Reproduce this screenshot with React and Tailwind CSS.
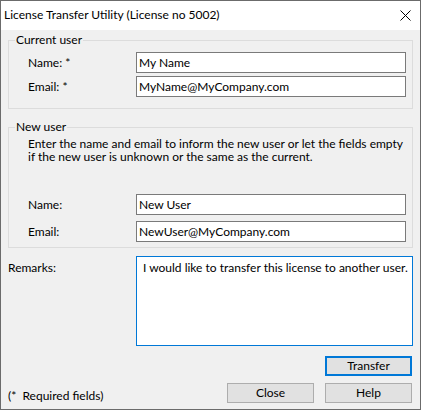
import { useState } from "react";

const font = "font-[family-name:Lato,sans-serif]";

function Field({ label, value, className = "" }) {
  return (
    <div className={`flex items-center pl-[19px] ${className}`}>
      <span className="w-[108px] text-[12px] leading-[16px]">{label}</span>
      <input
        readOnly
        defaultValue={value}
        className="w-[270px] h-[21px] border border-[#7a7a7a] bg-white px-[2px] text-[12px] text-black outline-none"
      />
    </div>
  );
}

export default function App() {
  const [remarks, setRemarks] = useState(
    "I would like to transfer this license to another user."
  );

  return (
    <div
      className={`w-[421px] h-[410px] flex flex-col bg-[#f0f0f0] border border-[#6b6b6b] text-black ${font}`}
    >
      {/* TITLE BAR */}
      <div className="h-[29px] shrink-0 bg-white flex items-center justify-between pl-[3px] pr-[9px] pb-[1px]">
        <span className="text-[12px] leading-[16px]">
          License Transfer Utility (License no 5002)
        </span>
        <svg width="11" height="11" viewBox="0 0 11 11" className="mt-[1px]">
          <path d="M0.5 0.5 L10.5 10.5 M10.5 0.5 L0.5 10.5" stroke="#000" strokeWidth="1" fill="none" />
        </svg>
      </div>

      {/* BODY */}
      <div className="flex flex-col px-[7px] pt-[2px]">
        {/* CURRENT USER */}
        <fieldset className="border border-[#dcdcdc] pb-[11px]">
          <legend className="ml-[6px] px-[1px] text-[12px] leading-[16px]">Current user</legend>
          <Field label="Name: *" value="My Name" className="mt-[4px]" />
          <Field label="Email: *" value="MyName@MyCompany.com" className="mt-[3px]" />
        </fieldset>

        {/* NEW USER */}
        <fieldset className="mt-[10px] border border-[#dcdcdc] pb-[5px]">
          <legend className="ml-[6px] px-[1px] text-[12px] leading-[16px]">New user</legend>
          <p className="mt-[2px] pl-[19px] text-[12px] leading-[13px] whitespace-nowrap">
            Enter the name and email to inform the new user or let the fields empty
            <br />
            if the new user is unknown or the same as the current.
          </p>
          <Field label="Name:" value="New User" className="mt-[31px]" />
          <Field label="Email:" value="NewUser@MyCompany.com" className="mt-[6px]" />
        </fieldset>

        {/* REMARKS */}
        <div className="mt-[8px] flex">
          <span className="w-[128px] pt-[4px] text-[12px] leading-[16px]">Remarks:</span>
          <textarea
            value={remarks}
            onChange={(e) => setRemarks(e.target.value)}
            className="w-[277px] h-[90px] resize-none border border-[#0078d7] bg-white pl-[6px] pt-[3px] text-[12px] leading-[16px] outline-none"
          />
        </div>

        {/* BUTTONS */}
        <div className="mt-[10px] flex justify-end pr-[1px]">
          <button className="w-[87px] h-[20px] border-2 border-[#0078d7] bg-[#e1e1e1] text-[12px] leading-[14px]">
            Transfer
          </button>
        </div>
        <div className="mt-[6px] flex items-center pr-[1px]">
          <span className="flex-1 pt-[6px] text-[12px] leading-[16px] whitespace-pre">(*  Required fields)</span>
          <button className="w-[87px] h-[20px] border border-[#adadad] bg-[#e1e1e1] text-[12px] leading-[16px]">
            Close
          </button>
          <button className="ml-[11px] w-[87px] h-[20px] border border-[#adadad] bg-[#e1e1e1] text-[12px] leading-[16px]">
            Help
          </button>
        </div>
      </div>
    </div>
  );
}
